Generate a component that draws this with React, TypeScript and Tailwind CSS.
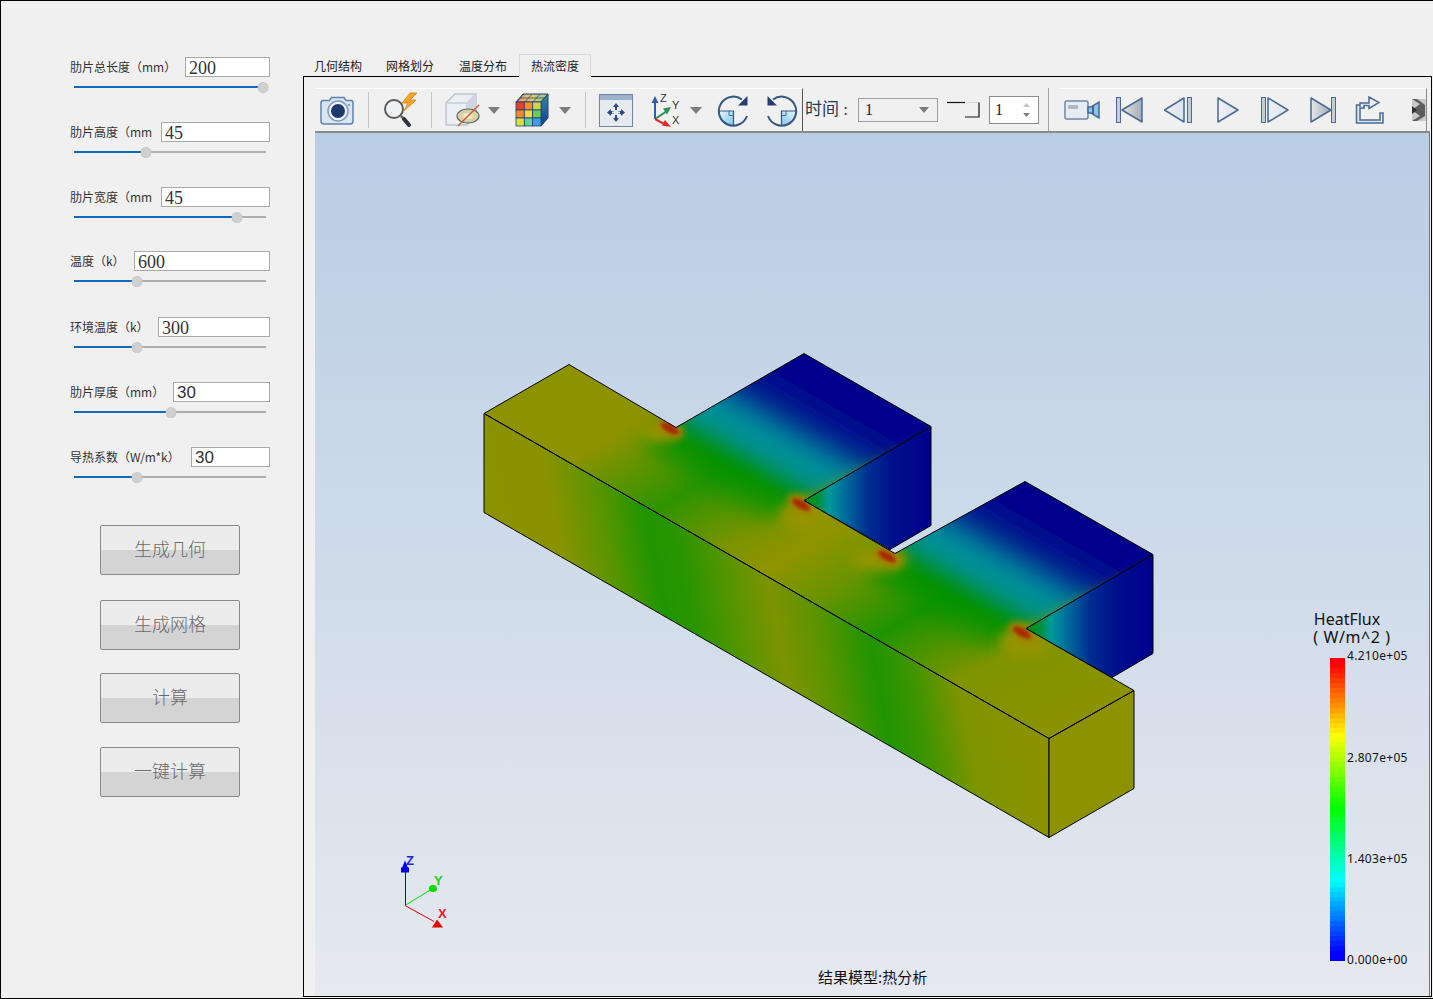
const rows = [
  { label: "肋片总长度（mm）", value: "200", inputW: "w-[85px]", knob: 263, gap: "mb-[29px]", serif: true },
  { label: "肋片高度（mm", value: "45", inputW: "w-[109px]", knob: 146, gap: "mb-[29px]", serif: true },
  { label: "肋片宽度（mm", value: "45", inputW: "w-[109px]", knob: 237, gap: "mb-[28px]", serif: true },
  { label: "温度（k）", value: "600", inputW: "w-[136px]", knob: 137, gap: "mb-[30px]", serif: true },
  { label: "环境温度（k）", value: "300", inputW: "w-[112px]", knob: 137, gap: "mb-[29px]", serif: true },
  { label: "肋片厚度（mm）", value: "30", inputW: "w-[97px]", knob: 171, gap: "mb-[29px]", serif: false },
  { label: "导热系数（W/m*k）", value: "30", inputW: "w-[79px]", knob: 137, gap: "mb-[42px]", serif: false },
];

const buttons = [
  { label: "生成几何", gap: "mb-[25px]" },
  { label: "生成网格", gap: "mb-[23px]" },
  { label: "计算", gap: "mb-[24px]" },
  { label: "一键计算", gap: "" },
];

const tabs = ["几何结构", "网格划分", "温度分布", "热流密度"];

const ticks = [
  { label: "4.210e+05", top: "top-[516px]" },
  { label: "2.807e+05", top: "top-[618px]" },
  { label: "1.403e+05", top: "top-[719px]" },
  { label: "0.000e+00", top: "top-[820px]" },
];

const TOP_FACE =
  "484,413 569,364 676,427 804,353 931,426 804,500 895,553 1025,481 1153,554 1026,628 1134,690 1049,738";

function SliderRow({ knob }: { knob: number }) {
  const pct = ((knob - 74) / 192) * 100;
  return (
    <div className="relative ml-[4px] mt-[5px] h-[11px] w-[192px]">
      <div className="absolute left-0 right-0 top-[4px] h-[2px] bg-[#adadad]" />
      <div className="absolute left-0 top-[4px] h-[2px] bg-[#0f68b8]" style={{ width: `${pct}%` }} />
      <div
        className="absolute top-0 h-[11px] w-[11px] -translate-x-1/2 rounded-full border border-dotted border-[#bdbdbd] bg-[#d0d0d0]"
        style={{ left: `${pct}%` }}
      />
    </div>
  );
}

function Divider({ className }: { className: string }) {
  return <div className={`h-[36px] w-px bg-[#c6c6c6] ${className}`} />;
}

function DropArrow({ className }: { className: string }) {
  return (
    <svg width="12" height="7" viewBox="0 0 12 7" className={className}>
      <path d="M0 0H12L6 7Z" fill="#7d7d7d" />
    </svg>
  );
}

function CameraIcon() {
  return (
    <svg width="34" height="29" viewBox="0 0 34 29" className="ml-[5px]">
      <path
        d="M3 4.5H9.5L11.5 1.5H24L26 4.5H31Q33 4.500 33 7V25Q33 28 30 28H4Q1 28 1 25V7Q1 4.500 3 4.500Z"
        fill="#dbe5f1"
        stroke="#5f82ad"
        strokeWidth="1.5"
      />
      <circle cx="18" cy="15" r="10" fill="#eef3f9" stroke="#7f9bbd" strokeWidth="1.5" />
      <circle cx="18" cy="15" r="7" fill="#1d3a70" />
      <circle cx="29" cy="9" r="1" fill="#5f82ad" />
    </svg>
  );
}

function SearchBoltIcon() {
  return (
    <svg width="36" height="36" viewBox="0 0 36 36" className="ml-[14px]">
      <circle cx="11" cy="17" r="9" fill="#eef0f2" stroke="#5a5a5a" strokeWidth="2" />
      <path d="M18 24L21 27" stroke="#6b6b6b" strokeWidth="2.500" />
      <path d="M21 27L26 33" stroke="#2c3440" strokeWidth="4" strokeLinecap="round" />
      <path d="M27 1L19 11H25L21 19L33 8H27L34 1Z" fill="#f3a52a" stroke="#dd7f12" strokeWidth="0.8" />
    </svg>
  );
}

function CubeIcon() {
  return (
    <svg width="36" height="36" viewBox="0 0 36 36" className="ml-[13px]">
      <path d="M1 11L10 2H31V24L22 33H1Z" fill="#eceef1" stroke="#b9c5d5" strokeWidth="1.500" />
      <path d="M1 11H22V33M22 11L31 2" fill="none" stroke="#c4ceda" strokeWidth="1.500" />
      <path d="M22 11L31 2V24L22 33Z" fill="#cfd6df" />
      <ellipse cx="23" cy="24" rx="11" ry="7" fill="#d9d2a0" stroke="#5c6470" strokeWidth="1.200" />
      <ellipse cx="23" cy="24" rx="5" ry="3" fill="#f3ead0" />
      <path d="M13 34L34 13" stroke="#d0592c" strokeWidth="1.500" />
    </svg>
  );
}

function ColorCubeIcon() {
  const cells = [
    ["#e3402b", "#f0902a", "#c8d846"],
    ["#f08a2a", "#f6d838", "#6ccc5a"],
    ["#d8e040", "#5fd0a0", "#3f9ee8"],
  ];
  return (
    <svg width="34" height="34" viewBox="0 0 34 34" className="ml-[15px]">
      <defs>
        <linearGradient id="cubeTop" x1="0" y1="0" x2="1" y2="0">
          <stop offset="0" stopColor="#e89a5c" />
          <stop offset="0.5" stopColor="#dcc878" />
          <stop offset="1" stopColor="#86cc8c" />
        </linearGradient>
        <linearGradient id="cubeSide" x1="0" y1="0" x2="0" y2="1">
          <stop offset="0" stopColor="#2f8fa0" />
          <stop offset="1" stopColor="#123a90" />
        </linearGradient>
      </defs>
      <path d="M1 9L8 1H33L26 9Z" fill="url(#cubeTop)" stroke="#24406f" />
      <path d="M9 1L2 9M17 1L10 9M25 1L18 9M5 5H30" stroke="#24406f" strokeWidth="0.7" />
      <path d="M26 9L33 1V25L26 33Z" fill="url(#cubeSide)" stroke="#24406f" />
      {cells.map((row, r) =>
        row.map((fill, c) => (
          <rect key={`${r}-${c}`} x={1 + c * 8.330} y={9 + r * 8} width={8.330} height={8} fill={fill} stroke="#24406f" strokeWidth="0.8" />
        )),
      )}
    </svg>
  );
}

function MoveIcon() {
  return (
    <svg width="34" height="33" viewBox="0 0 34 33">
      <rect x="0.500" y="0.500" width="33" height="32" fill="#e6e9ee" stroke="#71859f" />
      <rect x="1" y="1" width="32" height="5" fill="#9db2cd" />
      <path
        d="M17 9L20 13H18V17H22V15L26 18.500L22 22V20H18V24H20L17 28L14 24H16V20H12V22L8 18.500L12 15V17H16V13H14Z"
        fill="#2b4a78"
      />
      <rect x="15" y="16" width="4" height="5" fill="#e6e9ee" />
      <rect x="13" y="17.500" width="8" height="2" fill="#e6e9ee" />
    </svg>
  );
}

function AxesIcon() {
  return (
    <svg width="32" height="34" viewBox="0 0 32 34" className="ml-[17px]">
      <path d="M5 26V8" stroke="#2f5fa8" strokeWidth="2" />
      <path d="M5 3L1.500 10H8.500Z" fill="#2f5fa8" />
      <path d="M5 26L17 18" stroke="#2a9050" strokeWidth="2" />
      <path d="M21 14L13 15.500L17 21.500Z" fill="#2a9050" />
      <path d="M5 26L16 32" stroke="#e02a2a" strokeWidth="2" />
      <path d="M21 34L12 32.500L15 27Z" fill="#e02a2a" />
      <text x="10" y="9" fontSize="11" fill="#333" fontFamily="Liberation Sans, sans-serif">Z</text>
      <text x="22" y="16" fontSize="11" fill="#333" fontFamily="Liberation Sans, sans-serif">Y</text>
      <text x="22" y="31" fontSize="11" fill="#333" fontFamily="Liberation Sans, sans-serif">X</text>
    </svg>
  );
}

function RotateIcon({ flip, className }: { flip: boolean; className: string }) {
  return (
    <svg
      width="33"
      height="33"
      viewBox="0 0 33 33"
      className={`${className} ${flip ? "-scale-x-100" : ""}`}
    >
      <defs>
        <linearGradient id="rotFill" x1="0" y1="0" x2="1" y2="1">
          <stop offset="0" stopColor="#eaf5fc" />
          <stop offset="1" stopColor="#7cc6ee" />
        </linearGradient>
      </defs>
      <path d="M2 17A14.500 14.500 0 0 0 16.500 31.500V17Z" fill="url(#rotFill)" />
      <path d="M1.500 17H16.500V31.500" fill="none" stroke="#36587f" strokeWidth="1.200" />
      <path d="M12 17V21.500H16.500" fill="none" stroke="#36587f" strokeWidth="0.800" />
      <path d="M25 5.500A14.500 14.500 0 1 0 30 22" fill="none" stroke="#36587f" strokeWidth="2" />
      <path d="M30.500 2V11.500H21Z" fill="#263f70" />
    </svg>
  );
}

function VideoIcon() {
  return (
    <svg width="36" height="20" viewBox="0 0 36 20" className="ml-[5px]">
      <rect x="1" y="1" width="23" height="18" rx="2" fill="#e7ecf3" stroke="#6d85a6" strokeWidth="1.500" />
      <rect x="4" y="5" width="10" height="4" fill="#b3b8bf" />
      <path d="M24 7H27L35 2V18L27 13H24Z" fill="#8fc2e2" stroke="#456c9c" strokeWidth="1.500" />
      <path d="M29 6V14" stroke="#264f86" strokeWidth="1.500" />
    </svg>
  );
}

function TransportIcon({ kind, className }: { kind: "first" | "prev" | "play" | "next" | "last"; className: string }) {
  const shapes = {
    first: { bar: 0, tri: "M26 1V25L6 13Z", fill: "url(#tpDark)" },
    prev: { bar: 23, tri: "M20 1V25L0.500 13Z", fill: "url(#tpLight)" },
    play: { bar: -1, tri: "M1 1V25L21 13Z", fill: "url(#tpLight)" },
    next: { bar: 0, tri: "M7 1V25L27 13Z", fill: "url(#tpLight)" },
    last: { bar: 21, tri: "M1 1V25L21 13Z", fill: "url(#tpDark)" },
  }[kind];
  return (
    <svg width="28" height="26" viewBox="0 0 28 26" className={className}>
      <defs>
        <linearGradient id="tpDark" x1="0" y1="0" x2="1" y2="0">
          <stop offset="0" stopColor="#e4e6e9" />
          <stop offset="1" stopColor="#a4acb6" />
        </linearGradient>
        <linearGradient id="tpLight" x1="0" y1="0" x2="1" y2="0">
          <stop offset="0" stopColor="#eef1f5" />
          <stop offset="1" stopColor="#dce3ec" />
        </linearGradient>
      </defs>
      <path d={shapes.tri} fill={shapes.fill} stroke="#4a6a94" strokeWidth="1.500" strokeLinejoin="round" />
      {shapes.bar >= 0 && (
        <rect x={shapes.bar + 0.500} y="0.500" width="4" height="25" fill="#c3ccd8" stroke="#4a6a94" />
      )}
    </svg>
  );
}

function ExportIcon() {
  return (
    <svg width="30" height="28" viewBox="0 0 30 28" className="ml-[17px]">
      <path
        d="M9 13V9H1.500V27H28V17H25V24H5V12H9"
        fill="#dfe8f2"
        stroke="#4a6a94"
        strokeWidth="1.500"
      />
      <path d="M5 11V7H14V1L24 6.500L14 12.500V9.500H9V11" fill="#eaf0f6" stroke="#4a6a94" strokeWidth="1.500" />
    </svg>
  );
}

function OverflowIcon() {
  return (
    <svg width="14" height="22" viewBox="0 0 14 22" className="ml-[27px]">
      <rect width="14" height="22" fill="#c9c9c9" />
      <path d="M0 0L8 5L0 11L8 17L0 22H5L13 17V6L5 0Z" fill="#5d5d5d" />
      <path d="M0 7L5 11L0 15Z" fill="#2f2f2f" />
    </svg>
  );
}

function Toolbar() {
  return (
    <div className="flex h-[45px] items-center border-b-2 border-[#8a8a8a]">
      {/* Left group */}
      <div className="flex h-full w-[488px] items-center border-r border-r-[#555555] border-t border-t-white">
        <CameraIcon />
        <Divider className="ml-[14px]" />
        <SearchBoltIcon />
        <Divider className="ml-[12px]" />
        <CubeIcon />
        <DropArrow className="ml-[7px]" />
        <ColorCubeIcon />
        <DropArrow className="ml-[10px]" />
        <Divider className="ml-[14px]" />
        <div className="ml-[13px]"><MoveIcon /></div>
        <AxesIcon />
        <DropArrow className="ml-[8px]" />
        <RotateIcon flip={false} className="ml-[15px]" />
        <RotateIcon flip className="ml-[15px]" />
      </div>

      {/* Time group */}
      <div className="flex h-full w-[246px] items-center border-r border-[#a5a5a5]">
        <span className="ml-[2px] w-[53px] whitespace-pre font-['Liberation_Serif','Noto_Sans_CJK_SC',serif] text-[17px] text-[#2a3a55]">
          时间 :
        </span>
        <div className="flex h-[24px] w-[80px] items-center justify-between border border-[#a0a0a0] pl-[6px] pr-[8px] font-['Liberation_Serif',serif] text-[16px] text-[#222222]">
          1
          <svg width="10" height="6" viewBox="0 0 10 6">
            <path d="M0 0H10L5 6Z" fill="#7d7d7d" />
          </svg>
        </div>
        <svg width="33" height="17" viewBox="0 0 33 17" className="ml-[9px]">
          <path d="M0 1.500H18" stroke="#111" strokeWidth="1.200" />
          <path d="M18 1.500H32" stroke="#d8d8d8" strokeWidth="1" />
          <path d="M32 1.500V16H18" fill="none" stroke="#111" strokeWidth="1.200" />
        </svg>
        <div className="ml-[9px] flex h-[28px] w-[50px] items-center justify-between border border-[#8c8c8c] bg-white pl-[5px] pr-[8px] font-['Liberation_Serif',serif] text-[16px] text-[#222222]">
          1
          <svg width="7" height="16" viewBox="0 0 7 16">
            <path d="M0 5L3.500 1L7 5Z" fill="#c4c4c4" />
            <path d="M0 11L3.500 15L7 11Z" fill="#808080" />
          </svg>
        </div>
      </div>

      {/* Playback group */}
      <div className="ml-[10px] flex h-full w-[368px] items-center border-r border-r-[#8a8a8a] border-t border-t-white">
        <VideoIcon />
        <TransportIcon kind="first" className="ml-[16px]" />
        <TransportIcon kind="prev" className="ml-[20px]" />
        <TransportIcon kind="play" className="ml-[25px]" />
        <TransportIcon kind="next" className="ml-[16px]" />
        <TransportIcon kind="last" className="ml-[21px]" />
        <ExportIcon />
        <OverflowIcon />
      </div>
    </div>
  );
}

function Scene() {
  return (
    <svg viewBox="315 133 1114 862" className="absolute inset-0 h-full w-full">
      <defs>
        <clipPath id="topClip">
          <polygon points={TOP_FACE} />
        </clipPath>
        <filter id="blurFin" x="-20%" y="-20%" width="140%" height="140%">
          <feGaussianBlur stdDeviation="8" />
        </filter>
        <filter id="blurHalo" x="-60%" y="-60%" width="220%" height="220%">
          <feGaussianBlur stdDeviation="6" />
        </filter>
        <filter id="blurWarm" x="-60%" y="-60%" width="220%" height="220%">
          <feGaussianBlur stdDeviation="3" />
        </filter>
        <filter id="blurHot" x="-60%" y="-60%" width="220%" height="220%">
          <feGaussianBlur stdDeviation="1.800" />
        </filter>
        <linearGradient id="bodyTop" gradientUnits="userSpaceOnUse" x1="484" y1="413" x2="765.600" y2="901.400">
          <stop offset="0" stopColor="#8c9200" />
          <stop offset="0.15" stopColor="#8c9200" />
          <stop offset="0.3" stopColor="#2e9400" />
          <stop offset="0.42" stopColor="#7a9400" />
          <stop offset="0.49" stopColor="#8f9400" />
          <stop offset="0.58" stopColor="#6a9400" />
          <stop offset="0.69" stopColor="#1e9400" />
          <stop offset="0.83" stopColor="#7e9400" />
          <stop offset="1" stopColor="#8c9200" />
        </linearGradient>
        <linearGradient id="bodyFront" gradientUnits="userSpaceOnUse" x1="484" y1="462" x2="970" y2="370">
          <stop offset="0" stopColor="#8c9200" />
          <stop offset="0.12" stopColor="#8a9200" />
          <stop offset="0.22" stopColor="#569500" />
          <stop offset="0.3" stopColor="#1f9500" />
          <stop offset="0.36" stopColor="#2a9500" />
          <stop offset="0.46" stopColor="#5f9500" />
          <stop offset="0.52" stopColor="#7d9300" />
          <stop offset="0.6" stopColor="#5c9400" />
          <stop offset="0.7" stopColor="#1f9500" />
          <stop offset="0.77" stopColor="#3d9500" />
          <stop offset="0.86" stopColor="#7f9400" />
          <stop offset="1" stopColor="#8c9200" />
        </linearGradient>
        {[
          { id: "fin1Top", x1: 715, y1: 507, x2: 803, y2: 353 },
          { id: "fin2Top", x1: 937, y1: 635, x2: 1025, y2: 481 },
        ].map((g) => (
          <linearGradient key={g.id} id={g.id} gradientUnits="userSpaceOnUse" x1={g.x1} y1={g.y1} x2={g.x2} y2={g.y2}>
            <stop offset="0" stopColor="#009000" stopOpacity="0" />
            <stop offset="0.2" stopColor="#009300" stopOpacity="0.85" />
            <stop offset="0.29" stopColor="#009000" />
            <stop offset="0.34" stopColor="#009040" />
            <stop offset="0.4" stopColor="#009090" />
            <stop offset="0.5" stopColor="#00909a" />
            <stop offset="0.58" stopColor="#006098" />
            <stop offset="0.68" stopColor="#00208e" />
            <stop offset="0.78" stopColor="#000a8c" />
            <stop offset="0.9" stopColor="#00008c" />
          </linearGradient>
        ))}
        {[
          { id: "fin1Side", x1: 804, x2: 931 },
          { id: "fin2Side", x1: 1026, x2: 1153 },
        ].map((g) => (
          <linearGradient key={g.id} id={g.id} gradientUnits="userSpaceOnUse" x1={g.x1} y1="0" x2={g.x2} y2="0">
            <stop offset="0" stopColor="#009000" />
            <stop offset="0.1" stopColor="#009030" />
            <stop offset="0.2" stopColor="#00989a" />
            <stop offset="0.33" stopColor="#006a9a" />
            <stop offset="0.5" stopColor="#002f92" />
            <stop offset="0.7" stopColor="#00108c" />
            <stop offset="1" stopColor="#00008c" />
          </linearGradient>
        ))}
      </defs>

      {/* Fin side faces */}
      <polygon points="804,500 931,426 931,525 890,549" fill="url(#fin1Side)" stroke="#000" strokeWidth="1" />
      <polygon points="1026,628 1153,554 1153,653 1112,677" fill="url(#fin2Side)" stroke="#000" strokeWidth="1" />

      {/* Top face */}
      <polygon points={TOP_FACE} fill="url(#bodyTop)" />
      <g clipPath="url(#topClip)">
        <polygon
          points="640,447 668,415 790,300 1010,420 950,432 804,500 754,529"
          fill="url(#fin1Top)"
          filter="url(#blurFin)"
        />
        <polygon
          points="862,575 889,543 1011,428 1232,548 1172,560 1026,628 976,657"
          fill="url(#fin2Top)"
          filter="url(#blurFin)"
        />
        {[
          { x: 660, y: 431, rx: 18, ry: 11 },
          { x: 805, y: 515, rx: 24, ry: 16 },
          { x: 880, y: 559, rx: 28, ry: 12 },
          { x: 1024, y: 642, rx: 24, ry: 16 },
        ].map((h) => (
          <ellipse key={h.x} cx={h.x} cy={h.y} rx={h.rx} ry={h.ry} fill="#949400" filter="url(#blurHalo)" />
        ))}
        {[
          { x: 670, y: 428 },
          { x: 801, y: 504 },
          { x: 887, y: 556 },
          { x: 1022, y: 632 },
        ].map((h) => (
          <g key={h.x} transform={`rotate(30 ${h.x} ${h.y})`}>
            <ellipse cx={h.x} cy={h.y} rx="15" ry="8" fill="#a08000" filter="url(#blurWarm)" />
            <ellipse cx={h.x} cy={h.y} rx="10" ry="4" fill="#a82c00" filter="url(#blurHot)" />
          </g>
        ))}
      </g>

      {/* Front and end faces */}
      <polygon points="484,413 1049,738 1049,837 484,512" fill="url(#bodyFront)" stroke="#000" strokeWidth="1" />
      <polygon points="1049,738 1134,690 1134,788 1049,837" fill="#8c9200" stroke="#000" strokeWidth="1" />
      <polygon points={TOP_FACE} fill="none" stroke="#000" strokeWidth="1" />

      {/* Triad */}
      <path d="M405.500 905V868" stroke="#0000ff" strokeWidth="1" shapeRendering="crispEdges" />
      <path d="M405 860L409 870H401Z" fill="#0000e6" />
      <rect x="401" y="867" width="8" height="5" fill="#0000e6" />
      <path d="M405 905L431 889" stroke="#00dd00" strokeWidth="1" />
      <ellipse cx="433" cy="888" rx="4" ry="3.500" fill="#00dd00" />
      <path d="M405 905L434 921" stroke="#e60000" strokeWidth="1" />
      <path d="M437 919L443 927H432Z" fill="#e60000" />
      <text x="406" y="864" fontSize="13" fontWeight="700" fill="#2020e0" fontFamily="Liberation Sans, sans-serif">Z</text>
      <text x="434" y="884" fontSize="13" fontWeight="700" fill="#20d020" fontFamily="Liberation Sans, sans-serif">Y</text>
      <text x="438" y="917" fontSize="13" fontWeight="700" fill="#e02020" fontFamily="Liberation Sans, sans-serif">X</text>
    </svg>
  );
}

function Legend() {
  const bands = Array.from({ length: 61 }, (_, i) => {
    const t = (i + 0.5) / 61;
    const hue = 240 * Math.min(1, Math.max(0, (t - 0.02) / 0.95));
    return `hsl(${hue.toFixed(0)} 100% 50%)`;
  });
  return (
    <>
      <div className="absolute left-[984px] top-[478px] w-[96px] text-center font-['Noto_Sans',sans-serif] text-[16px] leading-[16px] text-[#111111]">
        HeatFlux
      </div>
      <div className="absolute left-[992px] top-[496px] w-[90px] text-center font-['Noto_Sans',sans-serif] text-[16px] leading-[16px] tracking-[0.6px] text-[#111111]">
        ( W/m^2 )
      </div>
      <div className="absolute left-[1015px] top-[525px] flex h-[303px] w-[15px] flex-col">
        {bands.map((color, i) => (
          <div key={i} className="flex-1" style={{ backgroundColor: color }} />
        ))}
      </div>
      {ticks.map((t) => (
        <div
          key={t.label}
          className={`absolute left-[1032px] ${t.top} font-['Noto_Sans',sans-serif] text-[12px] leading-[14px] tracking-[0.3px] text-[#111111]`}
        >
          {t.label}
        </div>
      ))}
    </>
  );
}

export default function App() {
  return (
    <div className="flex h-[999px] w-[1433px] overflow-hidden border-l border-t border-b border-black bg-[#f0f0f0] font-['Noto_Sans_CJK_SC',sans-serif]">
      {/* Parameter panel */}
      <div className="w-[302px] shrink-0 pl-[69px] pt-[56px]">
        <div className="w-[200px]">
          {rows.map((row) => (
            <div key={row.label} className={row.gap}>
              <div className="flex h-[20px] items-center justify-between">
                <span className="whitespace-nowrap text-[12px] text-[#333333]">{row.label}</span>
                <input
                  readOnly
                  value={row.value}
                  className={`h-[20px] ${row.inputW} border border-[#a9a9a9] bg-white pl-[3px] pt-[2px] outline-none text-[#333333] ${
                    row.serif
                      ? "font-['Liberation_Serif',serif] text-[18px]"
                      : "font-['Liberation_Sans',sans-serif] text-[17px]"
                  }`}
                />
              </div>
              <SliderRow knob={row.knob} />
            </div>
          ))}
        </div>

        <div className="ml-[30px] w-[140px]">
          {buttons.map((b) => (
            <button
              key={b.label}
              className={`block h-[50px] w-[140px] rounded-[2px] border border-[#8a8a8a] bg-[linear-gradient(#ececec_0,#ececec_51%,#d4d4d4_51%,#d4d4d4_100%)] pb-[4px] text-[18px] font-light text-[#6a6a6a] ${b.gap}`}
            >
              {b.label}
            </button>
          ))}
        </div>
      </div>

      {/* Tabs and result pane */}
      <div className="flex w-[1129px] shrink-0 flex-col pt-[53px]">
        <div className="relative z-10 flex h-[23px] text-[12px] text-[#222222]">
          {tabs.map((tab, i) => (
            <div
              key={tab}
              className={`flex h-[23px] w-[72px] items-center justify-center ${
                i === 3
                  ? "border border-b-0 border-[#d9d9d9] bg-[#f0f0f0]"
                  : i === 2
                    ? "pt-[1px]"
                    : "pr-[2px] pt-[1px]"
              }`}
            >
              {tab}
            </div>
          ))}
        </div>
        <div className="-mt-px flex h-[921px] flex-col border border-black pl-[11px] pt-[11px] pr-px">
          <Toolbar />
          <div className="relative flex-1 border-r border-[#777777] bg-linear-to-b from-[#b9cde4] to-[#e6e9ef]">
            <Scene />
            <Legend />
            <div className="absolute bottom-[9px] left-[503px] text-[15px] leading-[20px] text-[#111111]">
              结果模型:热分析
            </div>
          </div>
        </div>
      </div>
    </div>
  );
}
